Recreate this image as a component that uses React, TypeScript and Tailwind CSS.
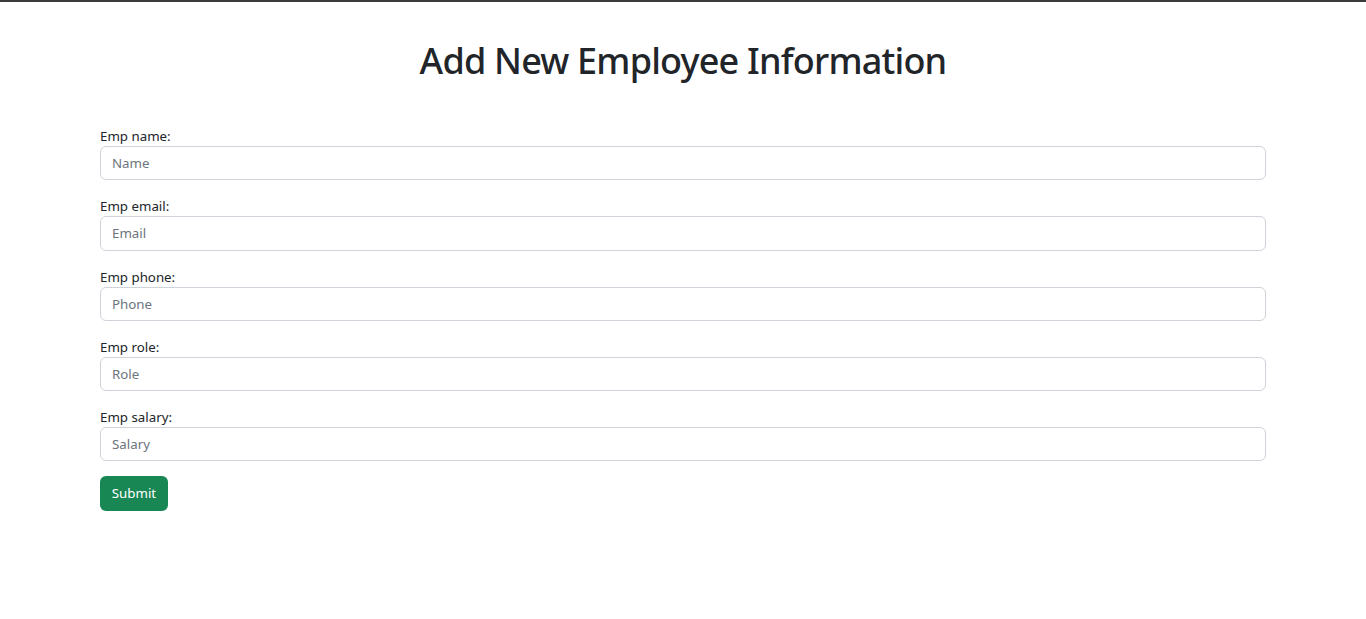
import React from "react";

const fields = [
  { label: "Emp name:", placeholder: "Name" },
  { label: "Emp email:", placeholder: "Email" },
  { label: "Emp phone:", placeholder: "Phone" },
  { label: "Emp role:", placeholder: "Role" },
  { label: "Emp salary:", placeholder: "Salary" },
];

export default function App() {
  return (
    <div
      className="min-h-[619px] bg-white text-[#212529]"
      style={{ fontFamily: '"Noto Sans", "Open Sans", sans-serif' }}
    >
      <div className="h-[2px] bg-[#3a3a3c]" />
      <div className="pt-[35px] flex justify-center">
        <h1 className="text-[36px] leading-[48px] font-medium tracking-[-0.8px]">Add New Employee Information</h1>
      </div>
      <form className="mt-[41px] mx-[100px] flex flex-col">
        {fields.map((f) => (
          <div key={f.label} className="flex flex-col mb-4">
            <label className="text-[13.3px] leading-[20px]">{f.label}</label>
            <input
              type="text"
              placeholder={f.placeholder}
              className="h-[34.25px] w-full rounded-[6px] border border-[#ced4da] bg-white px-[11px] text-[13.3px] text-[#212529] placeholder:text-[#6c757d] outline-none"
            />
          </div>
        ))}
        <div className="-mt-[1px]">
          <button
            type="button"
            className="h-[35px] w-[68px] rounded-[6px] bg-[#198754] text-[13.3px] text-white"
          >
            Submit
          </button>
        </div>
      </form>
    </div>
  );
}
